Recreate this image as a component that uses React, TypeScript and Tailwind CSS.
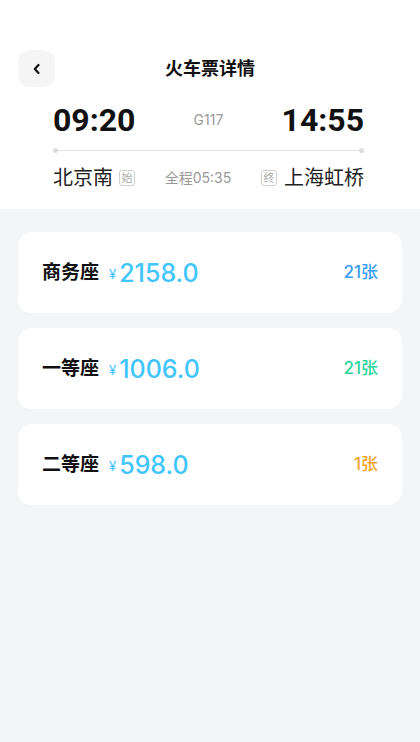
import React from "react";

const font = { fontFamily: "Inter, 'Noto Sans CJK SC', 'Noto Sans', sans-serif" };
const digits = { fontFamily: "Roboto, 'Noto Sans', sans-serif" };

const seats = [
  { name: "商务座", price: "2158.0", count: "21张", color: "text-[#3a9ef6]" },
  { name: "一等座", price: "1006.0", count: "21张", color: "text-[#2fd49a]" },
  { name: "二等座", price: "598.0", count: "1张", color: "text-[#f5a42f]" },
];

export default function App() {
  return (
    <div style={font} className="w-[420px] min-h-[742px] bg-[#f4f5f7] flex flex-col">
      <div className="bg-white pt-[50px] pb-[17px]">
        <div className="relative h-[37px] px-[18px] flex items-center">
          <button className="w-[37px] h-[37px] rounded-[12px] bg-[#f5f5f5] flex items-center justify-center">
            <svg width="14" height="14" viewBox="0 0 14 14" fill="none">
              <path d="M8.5 3 L4.8 7 L8.5 11" stroke="#111" strokeWidth="2.2" strokeLinecap="round" strokeLinejoin="round" />
            </svg>
          </button>
          <div className="absolute left-0 right-0 top-0 h-[37px] flex items-center justify-center pointer-events-none">
            <span className="text-[18px] font-bold text-[#111] leading-none">火车票详情</span>
          </div>
        </div>

        <div className="mt-[17px] pl-[53px] pr-[56px] flex items-center justify-between">
          <span style={digits} className="text-[32px] font-bold text-[#111] leading-[32px]">09:20</span>
          <span className="text-[14px] text-[#9a9a9a] leading-none">G117</span>
          <span style={digits} className="text-[32px] font-bold text-[#111] leading-[32px]">14:55</span>
        </div>

        <div className="mt-[12px] pl-[53px] pr-[56px] flex items-center">
          <div className="w-[5px] h-[5px] rounded-full bg-[#dcdcdc]" />
          <div className="flex-1 h-[1px] bg-[#e3e3e3]" />
          <div className="w-[5px] h-[5px] rounded-full bg-[#dcdcdc]" />
        </div>

        <div className="mt-[11px] pl-[53px] pr-[56px] flex items-center justify-between">
          <div className="flex items-center gap-[6px]">
            <span className="text-[20px] text-[#222] leading-[28px]">北京南</span>
            <span className="w-[16px] h-[16px] border border-[#cfcfcf] rounded-[3px] text-[11px] text-[#aaa] flex items-center justify-center leading-none">始</span>
          </div>
          <span className="text-[14px] text-[#999] leading-none">全程05:35</span>
          <div className="flex items-center gap-[7px]">
            <span className="w-[16px] h-[16px] border border-[#cfcfcf] rounded-[3px] text-[11px] text-[#aaa] flex items-center justify-center leading-none">终</span>
            <span className="text-[20px] text-[#222] leading-[28px]">上海虹桥</span>
          </div>
        </div>
      </div>

      <div className="px-[18px] pt-[23px] flex flex-col gap-[15px]">
        {seats.map((s) => (
          <div key={s.name} className="h-[81px] bg-white rounded-[14px] pl-[24px] pr-[24px] flex items-center justify-between">
            <div className="flex items-center">
              <span className="text-[19px] font-bold text-[#111] leading-[26px]">{s.name}</span>
              <span className="ml-[10px] mt-[3px] text-[13px] text-[#41c5fc] leading-none">¥</span>
              <span className="ml-[3px] text-[25px] font-medium text-[#41c5fc] leading-[26px]">{s.price}</span>
            </div>
            <span className={`text-[17px] font-medium ${s.color}`}>{s.count}</span>
          </div>
        ))}
      </div>
    </div>
  );
}
